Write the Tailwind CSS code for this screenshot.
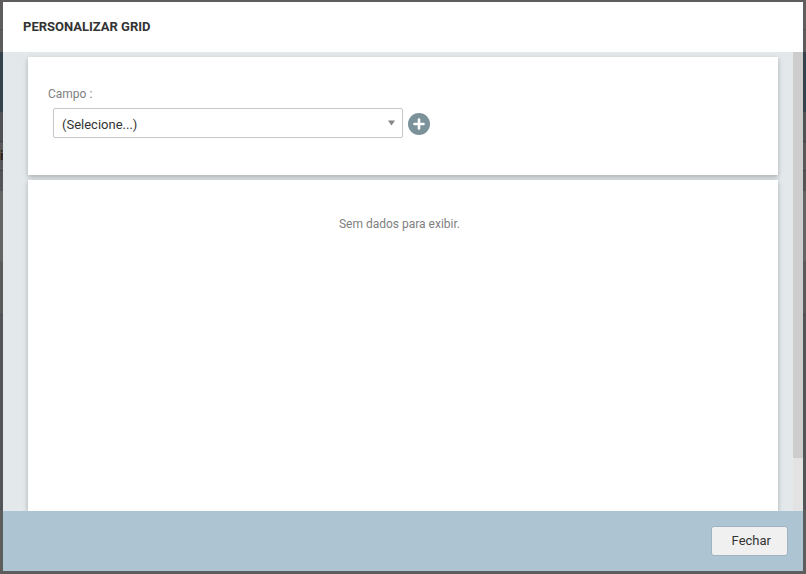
<!DOCTYPE html>
<html lang="pt-BR">
<head>
  <meta charset="UTF-8" />
  <title>Personalizar Grid</title>
  <meta name="viewport" content="width=device-width, initial-scale=1.0" />
  <script src="https://cdn.jsdelivr.net/npm/@tailwindcss/browser@4"></script>
</head>
<body class="relative h-screen overflow-hidden bg-[#5d5d5d] font-[Roboto,sans-serif] text-[13px] text-[#333]">

  <!-- Dimmed page behind the dialog -->
  <div class="absolute inset-0 flex flex-col" aria-hidden="true">
    <div class="h-[30px] border-b border-[#505050] bg-[#5f5d5e]"></div>
    <div class="h-[22px] bg-[#5c5c5c]"></div>
    <div class="h-[60px] bg-[#36424a]"></div>
    <div class="h-[30px] border-b border-[#404144] bg-[#505154]"></div>
    <div class="h-[29px] overflow-hidden border-b border-[#404144] bg-[#58585a] font-bold leading-7 text-[#2b1c14]">i</div>
    <div class="h-5 bg-[#545456]"></div>
    <div class="h-[70px] bg-[#646464]"></div>
    <div class="h-[54px] border-b border-[#4a4a4c] bg-[#5a5a5b]"></div>
    <div class="h-[195px] bg-[#535457]"></div>
  </div>

  <!-- Dialog -->
  <div role="dialog" aria-labelledby="titulo" class="relative flex h-full flex-col px-[3px] pt-0.5 pb-[3px]">
    <header class="flex h-[50px] shrink-0 items-center bg-white px-5">
      <h1 id="titulo" class="text-[13px] font-bold">PERSONALIZAR GRID</h1>
    </header>

    <div class="flex min-h-0 flex-1 bg-[#e3e9eb]">
      <main class="flex min-w-0 flex-1 flex-col gap-[5px] overflow-hidden pt-[5px] pr-[15px] pl-[25px]">
        <section class="h-[118px] shrink-0 bg-white px-5 pt-7 shadow-[0_2px_5px_rgba(0,0,0,0.26)]">
          <label for="campo" class="block text-xs leading-[18px] text-[#808080]">Campo :</label>
          <div class="mt-[5px] flex items-center gap-[5px] pl-[5px]">
            <div class="relative w-[350px]">
              <select id="campo" class="block h-[30px] w-full appearance-none rounded-xs border border-[#c6c6c6] bg-white px-2 pt-1 text-[13px] text-[#333]">
                <option>(Selecione...)</option>
              </select>
              <svg class="pointer-events-none absolute top-3 right-2 h-[6px] w-[7px]" viewBox="0 0 7 6"><path d="M0 .5h7L3.5 5.5z" fill="#858585" /></svg>
            </div>
            <button type="button" aria-label="Adicionar" class="mt-0.5 size-[22px]">
              <svg class="size-full" viewBox="0 0 22 22">
                <circle cx="11" cy="11" r="11" fill="#7b929b" />
                <path d="M11 6.5v9M6.5 11h9" stroke="#fff" stroke-width="2.6" stroke-linecap="round" />
              </svg>
            </button>
          </div>
        </section>

        <section class="flex-1 bg-white pt-[35px] pr-[7px] text-center shadow-[0_2px_5px_rgba(0,0,0,0.26)]">
          <p class="text-xs leading-[18px] text-[#808080]">Sem dados para exibir.</p>
        </section>
      </main>

      <!-- Scrollbar -->
      <div class="w-2.5 bg-[#e3e3e3] pb-[53px]">
        <div class="h-full bg-[#cdcdcd]"></div>
      </div>
    </div>

    <footer class="flex h-[60px] shrink-0 items-center justify-end bg-[#adc4d2] px-[15px]">
      <button type="button" class="h-[30px] rounded-[3px] border border-[#9fb3c0] bg-[#f0f0f0] pr-4 pl-5 text-[13px]">Fechar</button>
    </footer>
  </div>

</body>
</html>
